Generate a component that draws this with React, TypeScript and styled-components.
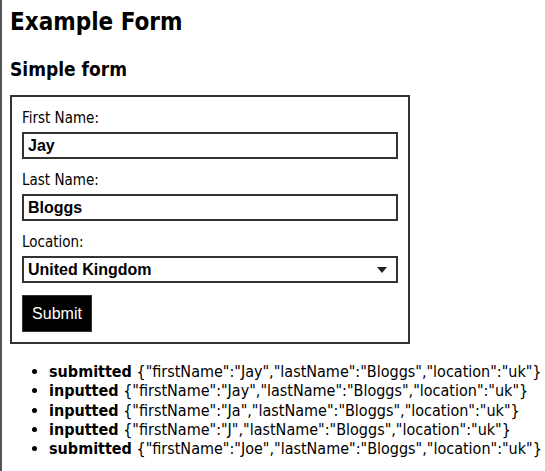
import React from "react";
import styled, { createGlobalStyle } from "styled-components";

const GlobalStyle = createGlobalStyle`
	html, body {
		margin: 0;
		padding: 0;
		background: #fff;
	}
	body {
		font-family: "DejaVu Sans Condensed", "DejaVu Sans", Tahoma, sans-serif;
		color: #000;
	}
`;

const Page = styled.div`
	min-height: 471px;
	box-sizing: border-box;
	padding: 8px 0 0 8px;
	border-left: 2px solid #555;
`;

const Title = styled.h1`
	margin: 0;
	font-size: 24px;
	line-height: 28px;
	font-weight: bold;
`;

const Subtitle = styled.h2`
	margin: 22px 0 0;
	font-size: 19px;
	line-height: 23px;
	font-weight: bold;
`;

const FormBox = styled.form`
	width: 400px;
	box-sizing: border-box;
	margin-top: 14px;
	border: 2px solid #333;
	padding: 12px 10px 10px;
`;

const Label = styled.label`
	display: block;
	font-size: 15px;
	line-height: 19px;
	margin-bottom: 4px;
`;

const Field = styled.div`
	margin-bottom: 12px;
`;

const TextInput = styled.input`
	display: block;
	width: 376px;
	height: 27px;
	box-sizing: border-box;
	border: 2px solid #333;
	padding: 0 4px;
	font-family: "Liberation Sans", Arial, sans-serif;
	font-weight: bold;
	font-size: 16px;
	outline: none;
`;

const SelectWrap = styled.div`
	position: relative;
	width: 376px;
`;

const Select = styled.select`
	display: block;
	width: 376px;
	height: 27px;
	box-sizing: border-box;
	border: 2px solid #333;
	padding: 0 4px;
	font-family: "Liberation Sans", Arial, sans-serif;
	font-weight: bold;
	font-size: 16px;
	background: #fff;
	color: #000;
	appearance: none;
	border-radius: 0;
	outline: none;
`;

const Caret = styled.svg`
	position: absolute;
	right: 11px;
	top: 11px;
	pointer-events: none;
`;

const SubmitButton = styled.button`
	display: block;
	margin-top: 11px;
	width: 70px;
	height: 37px;
	background: #000;
	color: #fff;
	border: 1px solid #333;
	font-family: "Liberation Sans", Arial, sans-serif;
	font-size: 16px;
	padding: 0;
`;

const EventList = styled.ul`
	margin: 18px 0 0;
	padding-left: 39px;
	font-size: 16px;
	line-height: 19.25px;
`;

const EventItem = styled.li`
	white-space: nowrap;
`;

const EventType = styled.b``;

const events = [
	{ type: "submitted", data: { firstName: "Jay", lastName: "Bloggs", location: "uk" } },
	{ type: "inputted", data: { firstName: "Jay", lastName: "Bloggs", location: "uk" } },
	{ type: "inputted", data: { firstName: "Ja", lastName: "Bloggs", location: "uk" } },
	{ type: "inputted", data: { firstName: "J", lastName: "Bloggs", location: "uk" } },
	{ type: "submitted", data: { firstName: "Joe", lastName: "Bloggs", location: "uk" } },
];

export default function App() {
	return (
		<>
			<GlobalStyle />
			<Page>
				<Title>Example Form</Title>
				<Subtitle>Simple form</Subtitle>
				<FormBox onSubmit={(e) => e.preventDefault()}>
					<Field>
						<Label>First Name:</Label>
						<TextInput defaultValue="Jay" />
					</Field>
					<Field>
						<Label>Last Name:</Label>
						<TextInput defaultValue="Bloggs" />
					</Field>
					<Field>
						<Label>Location:</Label>
						<SelectWrap>
							<Select defaultValue="uk">
								<option value="uk">United Kingdom</option>
								<option value="us">United States</option>
							</Select>
							<Caret width="10" height="6" viewBox="0 0 10 6">
								<path d="M0 0h10L5 6z" fill="#222" />
							</Caret>
						</SelectWrap>
					</Field>
					<SubmitButton type="submit">Submit</SubmitButton>
				</FormBox>
				<EventList>
					{events.map((ev, i) => (
						<EventItem key={i}>
							<EventType>{ev.type}</EventType> {JSON.stringify(ev.data)}
						</EventItem>
					))}
				</EventList>
			</Page>
		</>
	);
}
